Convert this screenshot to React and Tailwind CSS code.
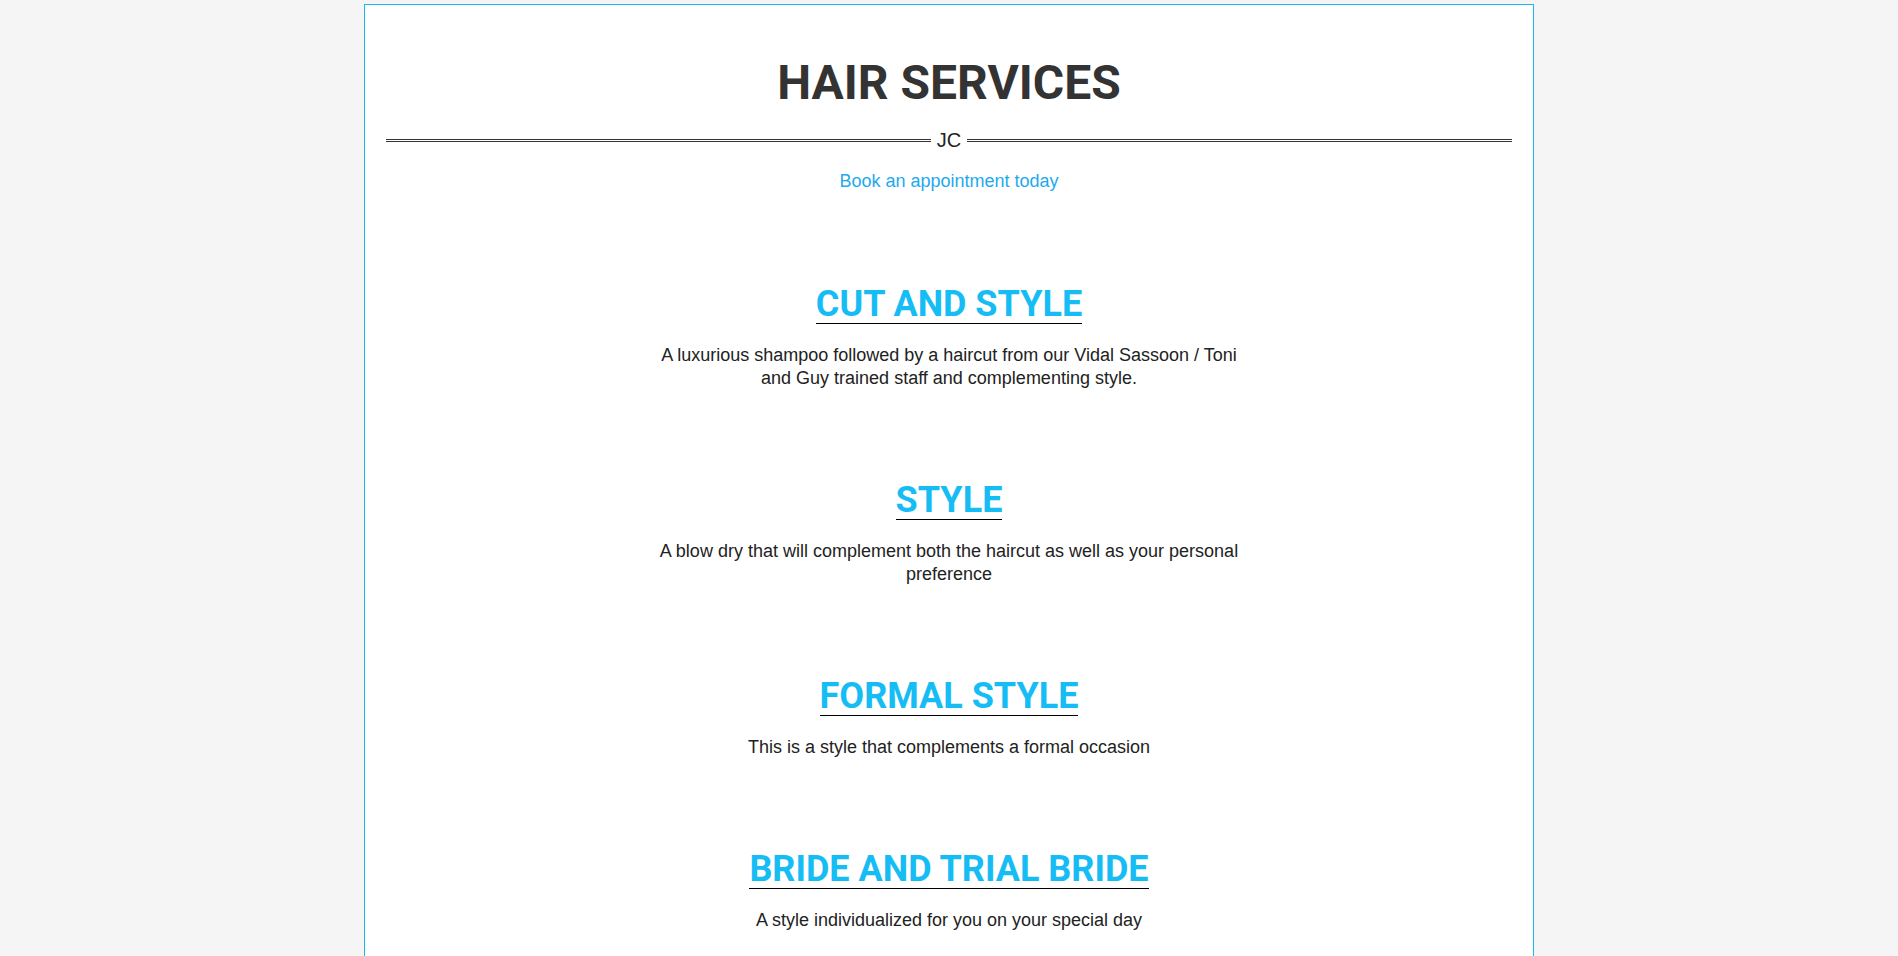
export default function App() {
  const services = [
    {
      title: "CUT AND STYLE",
      desc: "A luxurious shampoo followed by a haircut from our Vidal Sassoon / Toni and Guy trained staff and complementing style.",
    },
    {
      title: "STYLE",
      desc: "A blow dry that will complement both the haircut as well as your personal preference",
    },
    {
      title: "FORMAL STYLE",
      desc: "This is a style that complements a formal occasion",
    },
    {
      title: "BRIDE AND TRIAL BRIDE",
      desc: "A style individualized for you on your special day",
    },
  ];

  return (
    <div className="min-h-screen bg-[#f5f5f5] pt-1">
      <div className="mx-auto w-[1170px] border border-[#19b8ee] bg-white px-[21px] pt-[54px] pb-[120px]">
        <h1 className="text-center font-['Roboto',sans-serif] text-[48px] font-bold leading-none text-[#333]">
          HAIR SERVICES
        </h1>

        <div className="mt-[23px] flex items-center">
          <div className="h-[3px] flex-1 border-t-[3px] border-double border-[#333]" />
          <span className="px-[6px] font-['Liberation_Sans',Arial,sans-serif] text-[20px] leading-[20px] text-[#222]">
            JC
          </span>
          <div className="h-[3px] flex-1 border-t-[3px] border-double border-[#333]" />
        </div>

        <div className="mt-[19px] text-center">
          <a
            href="#"
            className="font-['Liberation_Sans',Arial,sans-serif] text-[18px] leading-[24px] text-[#1eaaee]"
          >
            Book an appointment today
          </a>
        </div>

        <div className="mt-[93px] flex flex-col items-center gap-[92px]">
          {services.map((s) => (
            <div key={s.title} className="flex flex-col items-center">
              <h2 className="inline-block border-b border-black pb-[1px] font-['Roboto',sans-serif] text-[36px] font-bold leading-none text-[#16bdf4]">
                {s.title}
              </h2>
              <p className="mt-[20px] max-w-[600px] text-center font-['Liberation_Sans',Arial,sans-serif] text-[18px] leading-[23px] text-[#222]">
                {s.desc}
              </p>
            </div>
          ))}
        </div>
      </div>
    </div>
  );
}
